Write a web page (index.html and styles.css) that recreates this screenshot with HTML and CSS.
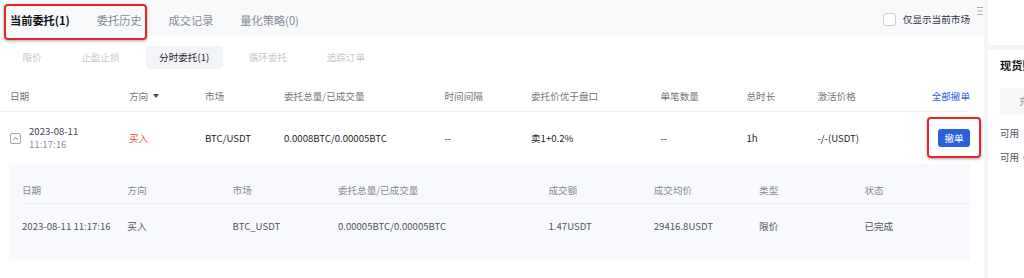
FILE: index.html
```html
<!DOCTYPE html>
<html lang="zh-CN">
<head>
<meta charset="utf-8">
<title>当前委托</title>
<link rel="stylesheet" href="styles.css">
</head>
<body>
<div class="page">
  <main class="main">
    <div class="tabbar">
      <nav class="tabs">
        <span class="tab active">当前委托(1)</span>
        <span class="tab">委托历史</span>
        <span class="tab">成交记录</span>
        <span class="tab">量化策略(0)</span>
      </nav>
      <label class="only-current"><span class="checkbox"></span>仅显示当前市场</label>
      <span class="handle"><svg width="6" height="8" viewBox="0 0 6 8"><path d="M0 0.5H6M0 4H6M0 7.5H6" stroke="#a9aeb8" stroke-width="1"/></svg></span>
    </div>

    <div class="subtabs">
      <span class="subtab">限价</span>
      <span class="subtab">止盈止损</span>
      <span class="subtab active">分时委托(1)</span>
      <span class="subtab">循环委托</span>
      <span class="subtab">追踪订单</span>
    </div>

    <div class="orders">
      <div class="grid head">
        <span>日期</span>
        <span class="sortable">方向 <svg width="6" height="4" viewBox="0 0 6 4"><path d="M0 0H6L3 4Z" fill="#4b515c"/></svg></span>
        <span>市场</span>
        <span>委托总量/已成交量</span>
        <span>时间间隔</span>
        <span>委托价优于盘口</span>
        <span>单笔数量</span>
        <span>总时长</span>
        <span>激活价格</span>
        <span class="cancel-all">全部撤单</span>
      </div>
      <div class="grid row">
        <span class="date-cell">
          <svg class="expand" width="11" height="11" viewBox="0 0 11 11"><rect x="0.5" y="0.5" width="10" height="10" rx="1.5" fill="none" stroke="#9ba1ab"/><path d="M3.2 6.6L5.5 4.3L7.8 6.6" fill="none" stroke="#6f7581" stroke-width="1"/></svg>
          <span class="date-text"><span class="d1">2023-08-11</span><span class="d2">11:17:16</span></span>
        </span>
        <span class="buy">买入</span>
        <span>BTC/USDT</span>
        <span>0.0008BTC/0.00005BTC</span>
        <span>--</span>
        <span>卖1+0.2%</span>
        <span>--</span>
        <span>1h</span>
        <span>-/-(USDT)</span>
        <span class="action"><button class="btn-cancel">撤单</button></span>
      </div>
      <div class="detail">
        <div class="dgrid dhead">
          <span>日期</span><span>方向</span><span>市场</span><span>委托总量/已成交量</span>
          <span>成交额</span><span>成交均价</span><span>类型</span><span>状态</span>
        </div>
        <div class="dgrid drow">
          <span>2023-08-11 11:17:16</span><span>买入</span><span>BTC_USDT</span><span>0.00005BTC/0.00005BTC</span>
          <span>1.47USDT</span><span>29416.8USDT</span><span>限价</span><span>已完成</span>
        </div>
      </div>
    </div>

    <div class="mark mark-tabs"></div>
    <div class="mark mark-cancel"></div>
  </main>

  <aside class="side">
    <div class="side-top"></div>
    <div class="side-card">
      <div class="side-title">现货账户</div>
      <div class="side-switch"><span>充币</span><span>划转</span></div>
      <div class="side-line"><span>可用</span><span class="side-val">--</span></div>
      <div class="side-line"><span>可用</span><span class="side-val near">0.00 BTC</span></div>
    </div>
  </aside>
</div>
</body>
</html>
```

FILE: styles.css
```css
html, body {
  margin: 0;
  padding: 0;
  overflow: hidden;
}

body {
  font-family: "Noto Sans CJK SC", "Noto Sans", sans-serif;
  font-size: 9.6px;
  color: #1b1f26;
  background: #f4f5f7;
}

.page {
  display: flex;
  gap: 4px;
  height: 278px;
}

.main {
  position: relative;
  flex: none;
  width: 984px;
  background: #ffffff;
}

/* top tab bar */
.tabbar {
  display: flex;
  align-items: center;
  height: 36px;
  padding: 3px 1px 0 10px;
  box-sizing: border-box;
  background: #f8f9fb;
}

.tabs {
  display: flex;
  gap: 27px;
}

.tab {
  font-size: 11.2px;
  line-height: 16px;
  color: #868b96;
}

.tab.active {
  color: #121418;
  font-weight: 700;
}

.only-current {
  margin-left: auto;
  display: flex;
  align-items: center;
  gap: 7px;
  color: #30343b;
  line-height: 13px;
}

.checkbox {
  width: 13px;
  height: 13px;
  box-sizing: border-box;
  border: 1px solid #c9ccd3;
  border-radius: 3px;
  background: #fff;
}

.handle {
  align-self: flex-start;
  margin: 4px 0 0 7px;
  line-height: 0;
}

/* sub tabs */
.subtabs {
  display: flex;
  gap: 12.5px;
  margin-top: 10px;
  padding-left: 9px;
}

.subtab {
  height: 23px;
  line-height: 23px;
  padding: 0 13.5px;
  border-radius: 4px;
  color: #c3c7ce;
}

.subtab.active {
  background: #f3f4f7;
  color: #1f232a;
}

/* main table */
.orders {
  margin: 11px 14px 0 0;
}

.grid {
  display: grid;
  grid-template-columns: 119px 76px 79px 160.5px 86.5px 129.5px 86px 71px 1fr auto;
  align-items: center;
  padding-left: 10px;
}

.head {
  height: 31px;
  border-bottom: 1px solid #eef0f3;
  color: #6f7581;
}

.sortable {
  display: flex;
  align-items: center;
  gap: 5px;
}

.cancel-all {
  color: #2f66e0;
  text-align: right;
}

.row {
  height: 52px;
}

.date-cell {
  display: flex;
  align-items: center;
  gap: 8px;
}

.expand {
  flex: none;
}

.date-text {
  display: flex;
  flex-direction: column;
  line-height: 12.6px;
  margin-top: -1px;
}

.d1 {
  color: #434955;
}

.d2 {
  color: #8a909a;
}

.buy {
  color: #e8504a;
}

.action {
  text-align: right;
}

.btn-cancel {
  width: 32px;
  height: 18px;
  padding: 0;
  border: none;
  border-radius: 3px;
  background: #2a5fdf;
  color: #ffffff;
  font-family: inherit;
  font-size: 9.6px;
  line-height: 18px;
  vertical-align: middle;
}

/* expanded detail */
.detail {
  margin-left: 9px;
  padding: 13px 0 12px 13px;
  background: #f8f9fc;
}

.dgrid {
  display: grid;
  grid-template-columns: 105.3px 105.3px 105.3px 210.6px 105.3px 105.3px 105.3px 1fr;
  align-items: center;
}

.dhead {
  height: 26px;
  border-bottom: 1px solid #eceef2;
  color: #858a95;
}

.drow {
  height: 44px;
  color: #4f5561;
}

/* annotation marks */
.mark {
  position: absolute;
  border: 2px solid #e2262c;
  border-radius: 4px;
  box-shadow: 0 1px 3px rgba(0, 0, 0, 0.35);
  box-sizing: border-box;
}

.mark-tabs {
  left: 4px;
  top: 4px;
  width: 143px;
  height: 36px;
}

.mark-cancel {
  left: 927px;
  top: 117px;
  width: 54px;
  height: 41px;
}

/* side column */
.side {
  flex: none;
  width: 300px;
  display: flex;
  flex-direction: column;
  gap: 5px;
}

.side-top {
  height: 45px;
  background: #ffffff;
}

.side-card {
  flex: 1;
  background: #ffffff;
  padding: 9px 12px 0 12px;
}

.side-title {
  font-size: 11.2px;
  font-weight: 700;
  line-height: 13px;
  color: #15181d;
}

.side-switch {
  display: flex;
  gap: 40px;
  margin-top: 16px;
  height: 27px;
  line-height: 27px;
  padding-left: 19px;
  border-radius: 3px;
  background: #f5f6f8;
  color: #8a8f99;
}

.side-line {
  display: flex;
  gap: 12px;
  height: 24px;
  line-height: 24px;
  color: #50565f;
}

.side-line .near {
  margin-left: -8px;
}

.side-val {
  color: #1b1f26;
}

.side-card .side-line:nth-of-type(3) {
  margin-top: 6px;
}
```
